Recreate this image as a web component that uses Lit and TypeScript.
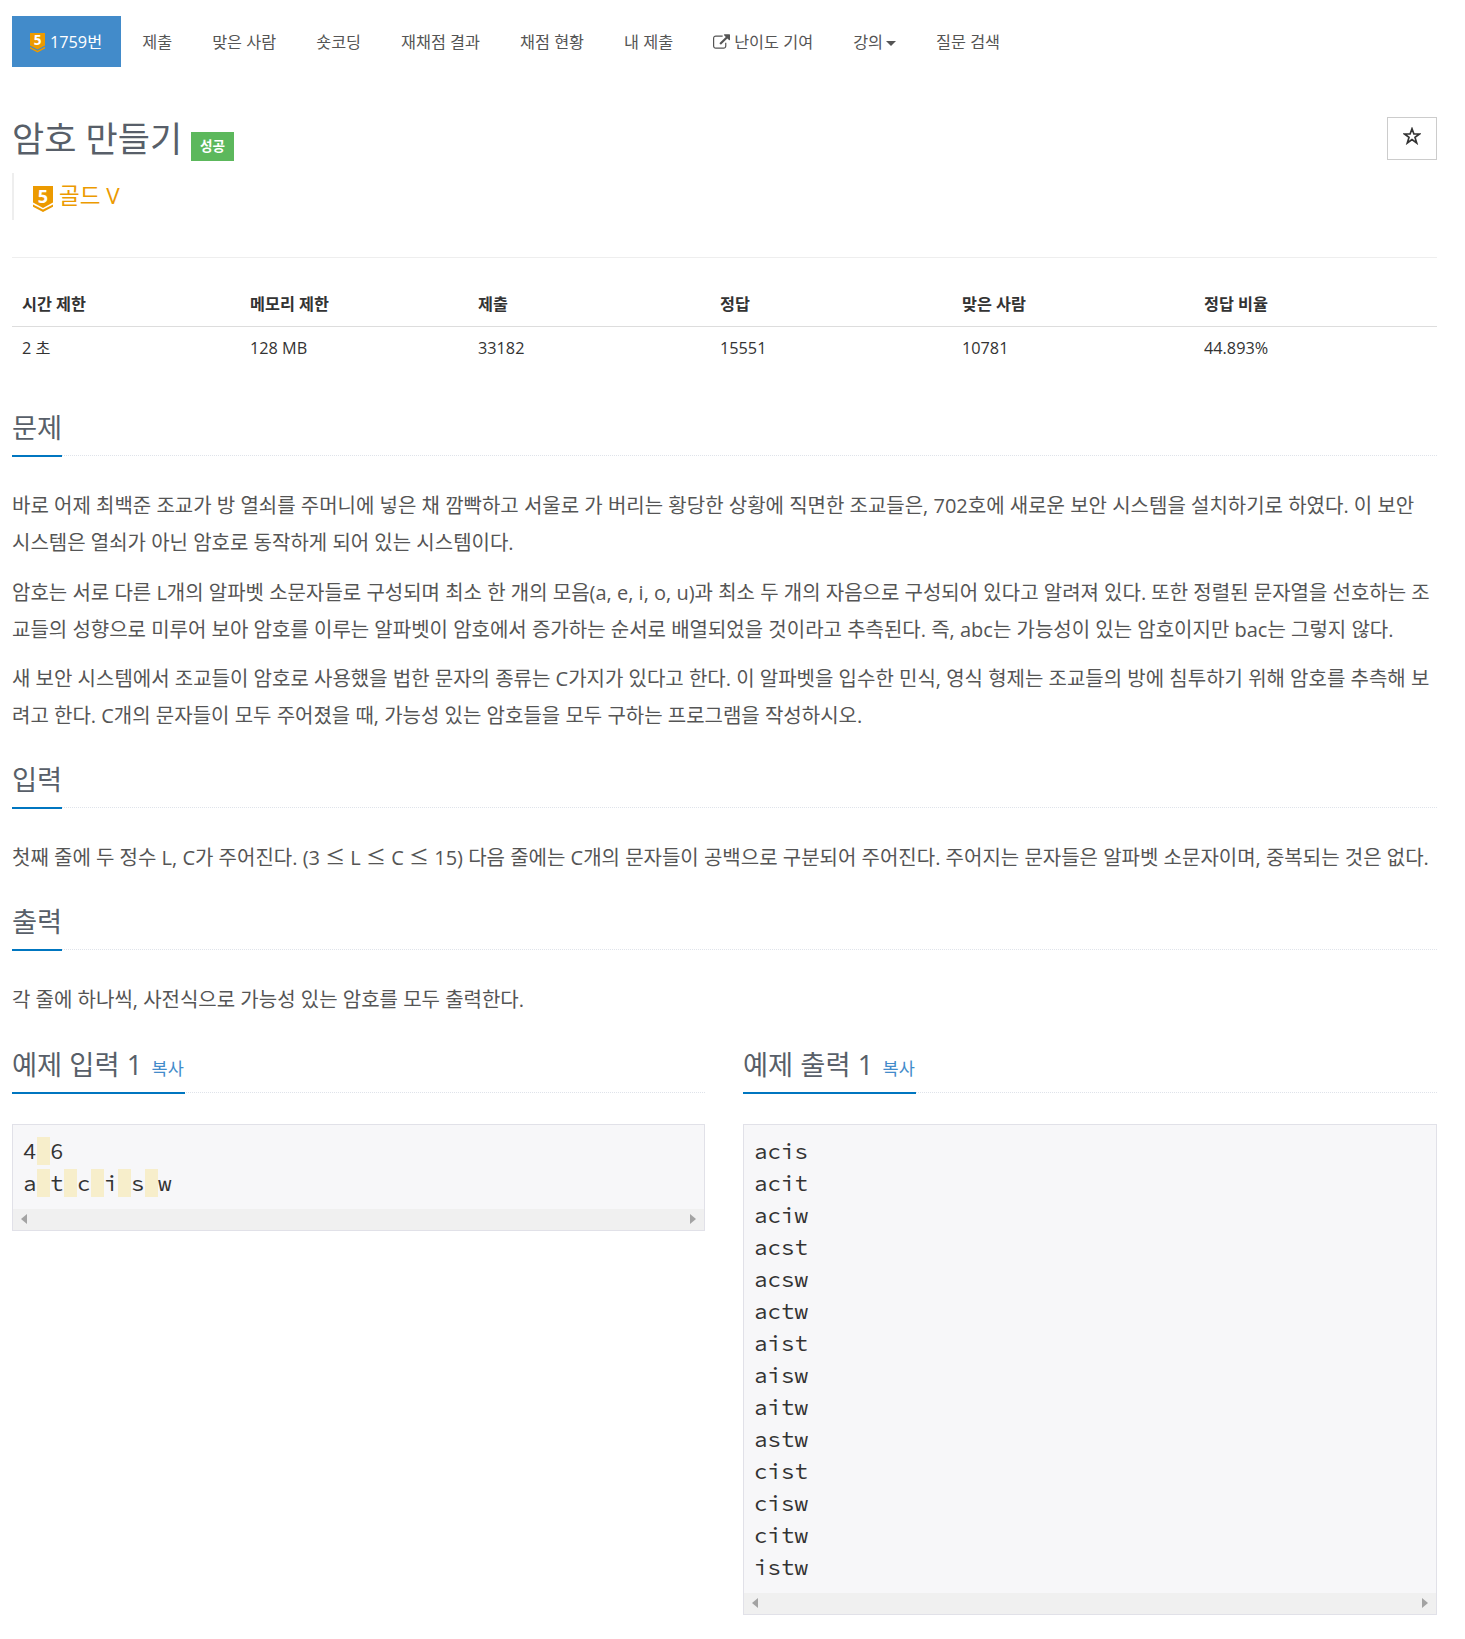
import { LitElement, html, css, svg } from "lit";
import { customElement, property } from "lit/decorators.js";

const NAV = ["제출", "맞은 사람", "숏코딩", "재채점 결과", "채점 현황", "내 제출"];
const STATS: [string, string][] = [
  ["시간 제한", "2 초"],
  ["메모리 제한", "128 MB"],
  ["제출", "33182"],
  ["정답", "15551"],
  ["맞은 사람", "10781"],
  ["정답 비율", "44.893%"],
];
const PROBLEM = [
  [
    "바로 어제 최백준 조교가 방 열쇠를 주머니에 넣은 채 깜빡하고 서울로 가 버리는 황당한 상황에 직면한 조교들은, 702호에 새로운 보안 시스템을 설치하기로 하였다. 이 보안",
    "시스템은 열쇠가 아닌 암호로 동작하게 되어 있는 시스템이다.",
  ],
  [
    "암호는 서로 다른 L개의 알파벳 소문자들로 구성되며 최소 한 개의 모음(a, e, i, o, u)과 최소 두 개의 자음으로 구성되어 있다고 알려져 있다. 또한 정렬된 문자열을 선호하는 조",
    "교들의 성향으로 미루어 보아 암호를 이루는 알파벳이 암호에서 증가하는 순서로 배열되었을 것이라고 추측된다. 즉, abc는 가능성이 있는 암호이지만 bac는 그렇지 않다.",
  ],
  [
    "새 보안 시스템에서 조교들이 암호로 사용했을 법한 문자의 종류는 C가지가 있다고 한다. 이 알파벳을 입수한 민식, 영식 형제는 조교들의 방에 침투하기 위해 암호를 추측해 보",
    "려고 한다. C개의 문자들이 모두 주어졌을 때, 가능성 있는 암호들을 모두 구하는 프로그램을 작성하시오.",
  ],
];
const INPUT = [["첫째 줄에 두 정수 L, C가 주어진다. (3 ≤ L ≤ C ≤ 15) 다음 줄에는 C개의 문자들이 공백으로 구분되어 주어진다. 주어지는 문자들은 알파벳 소문자이며, 중복되는 것은 없다."]];
const OUTPUT = [["각 줄에 하나씩, 사전식으로 가능성 있는 암호를 모두 출력한다."]];
const SAMPLE_IN = ["4 6", "a t c i s w"];
const SAMPLE_OUT = ["acis", "acit", "aciw", "acst", "acsw", "actw", "aist", "aisw", "aitw", "astw", "cist", "cisw", "citw", "istw"];

@customElement("tier-badge")
class TierBadge extends LitElement {
  static styles = css`
    :host { display: block; flex: none; }
    .badge { display: block; width: 100%; height: 100%; overflow: visible; }
    .num { font: 700 18px "Open Sans", sans-serif; }
  `;
  render() {
    return html`<svg class="badge" viewBox="0 0 20 26">
      ${svg`<path d="M0 0H20V16.6L10 22L0 16.6Z" fill="#ec9a00"/>
      <path d="M0 18.4L10 23.6L20 18.4V20.8L10 26L0 20.8Z" fill="#ec9a00"/>
      <text class="num" x="10" y="16.6" text-anchor="middle" fill="#fff">5</text>`}
    </svg>`;
  }
}

@customElement("section-title")
class SectionTitle extends LitElement {
  @property() label = "";
  @property({ type: Boolean }) copy = false;
  static styles = css`
    :host { display: flex; height: 51px; border-bottom: 1px dotted #dfe3ea; box-sizing: border-box; }
    .title {
      margin: 0; height: 52px; box-sizing: border-box; border-bottom: 2px solid #0076c0;
      font-size: 27.3px; line-height: 46px; font-weight: 400; color: #585f69; white-space: nowrap;
    }
    .copy { font-size: 17.5px; color: #428bca; margin: 0 0.9px 0 2.2px; }
  `;
  render() {
    return html`<h2 class="title">${this.label}${this.copy ? html` <span class="copy">복사</span>` : ""}</h2>`;
  }
}

@customElement("sample-box")
class SampleBox extends LitElement {
  @property({ attribute: false }) lines: string[] = [];
  @property({ type: Boolean }) marks = false;
  static styles = css`
    :host { display: block; border: 1px solid #e1e1e8; background: #f7f7f9; }
    .code {
      margin: 0; padding: 10px 10px; color: #333; font-size: 22.5px; line-height: 32px;
      font-family: "Source Code Pro", "Liberation Mono", monospace;
    }
    .line { display: flex; height: 32px; white-space: pre; }
    .space { width: 13.5px; height: 28px; margin-top: 2px; background: #f7eecb; }
    .bar { height: 21px; background: #f0f0f0; display: flex; justify-content: space-between; align-items: center; padding: 0 8px; }
    .arrow { display: block; width: 6px; height: 10px; }
  `;
  render() {
    return html`<div class="code">
        ${this.lines.map((l) => html`<div class="line">${this.marks
          ? [...l].map((c) => (c === " " ? html`<span class="space"></span>` : html`<span>${c}</span>`))
          : l}</div>`)}
      </div>
      <div class="bar">
        <svg class="arrow" viewBox="0 0 6 10"><path d="M6 0V10L0 5Z" fill="#a3a3a3"/></svg>
        <svg class="arrow" viewBox="0 0 6 10"><path d="M0 0V10L6 5Z" fill="#a3a3a3"/></svg>
      </div>`;
  }
}

@customElement("app-root")
class AppRoot extends LitElement {
  static styles = css`
    :host {
      display: block; box-sizing: border-box; min-height: 1639px; padding: 16px 28px 24px 12px; background: #fff;
      font-family: "Open Sans", "Noto Sans CJK KR", sans-serif; font-size: 16.25px; color: #333;
    }
    .nav { display: flex; height: 51px; gap: 2.5px; color: #555; line-height: 49px; white-space: nowrap; }
    .item { display: flex; align-items: center; padding: 2px 18.75px 0; }
    .active { background: #428bca; color: #fff; width: 109px; box-sizing: border-box; padding: 2px 0 0 18px; }
    .small { width: 15px; height: 19.5px; margin: 1px 5px 0 0; }
    .ext { width: 17px; height: 15px; margin: 0 4px 2px 0; }
    .caret { width: 0; height: 0; border: 5px solid transparent; border-top-color: #555; border-bottom: 0; margin: 1px 0 0 3px; }
    .head { display: flex; justify-content: space-between; align-items: flex-start; margin-top: 50px; height: 56px; }
    .name { display: flex; }
    .title { margin: 0; font-size: 35px; line-height: 43px; font-weight: 400; color: #585f69; white-space: nowrap; }
    .ok { margin: 15px 0 0 9px; width: 43px; height: 29px; line-height: 28px; text-align: center; background: #5cb85c; color: #fff; font-size: 13.6px; font-weight: 600; }
    .fav { box-sizing: border-box; width: 50px; height: 43px; border: 1px solid #ccc; display: flex; justify-content: center; padding-top: 9px; }
    .star { width: 18px; height: 18px; }
    .tier { display: flex; height: 47px; border-left: 2px solid #eee; padding-left: 19px; color: #ec9a00; font-size: 22.5px; line-height: 46px; }
    .big { width: 20px; height: 26px; margin: 13px 6px 0 0; }
    .rule { height: 1px; background: #eee; margin-top: 37px; }
    .stats { display: grid; grid-template-columns: 228px 228px 242px 242px 242px 1fr; margin-top: 25px; }
    .th { height: 43px; line-height: 43px; padding-left: 10px; font-weight: 700; border-bottom: 1px solid #ddd; }
    .td { height: 43px; line-height: 43px; padding-left: 10px; }
    .first { margin-top: 35px; }
    .text { padding-top: 31px; margin-bottom: 10.7px; font-size: 20px; line-height: 37px; color: #555; display: flow-root; }
    .para { margin: 0 0 12.5px; white-space: nowrap; }
    .le { font-family: "Noto Sans CJK KR", sans-serif; line-height: 1; }
    .samples { display: grid; grid-template-columns: 693px 694px; justify-content: space-between; align-items: start; }
    .box { margin-top: 31px; }
  `;
  private math(line: string) {
    return line.split("≤").map((part, i) => html`${i ? html`<span class="le">≤</span>` : ""}${part}`);
  }
  private text(paras: string[][]) {
    return html`<div class="text">${paras.map((p) => html`<p class="para">${p.map((l, i) => html`${i ? html`<br />` : ""}${this.math(l)}`)}</p>`)}</div>`;
  }
  render() {
    return html`
      <nav class="nav">
        <div class="item active"><tier-badge class="small"></tier-badge>1759번</div>
        ${NAV.map((n) => html`<div class="item">${n}</div>`)}
        <div class="item">
          <svg class="ext" viewBox="0 0 1792 1536"><path fill="#555" d="M1408 928v320q0 119-84.500 203.500t-203.500 84.500h-832q-119 0-203.500-84.500t-84.500-203.500v-832q0-119 84.500-203.500t203.500-84.500h704q14 0 23 9t9 23v64q0 14-9 23t-23 9h-704q-66 0-113 47t-47 113v832q0 66 47 113t113 47h832q66 0 113-47t47-113v-320q0-14 9-23t23-9h64q14 0 23 9t9 23zM1792 64v512q0 26-19 45t-45 19-45-19l-176-176-652 652q-10 10-23 10t-23-10l-114-114q-10-10-10-23t10-23l652-652-176-176q-19-19-19-45t19-45 45-19h512q26 0 45 19t19 45z"/></svg>난이도 기여
        </div>
        <div class="item">강의<span class="caret"></span></div>
        <div class="item">질문 검색</div>
      </nav>
      <header class="head">
        <div class="name"><h1 class="title">암호 만들기</h1><span class="ok">성공</span></div>
        <div class="fav"><svg class="star" viewBox="0 0 18 18"><path d="M9 1.800L10.900 7H16.500L12 10.400L13.700 16L9 12.600L4.300 16L6 10.400L1.500 7H7.100Z" fill="none" stroke="#333" stroke-width="1.700"/></svg></div>
      </header>
      <div class="tier"><tier-badge class="big"></tier-badge>골드 V</div>
      <div class="rule"></div>
      <div class="stats">
        ${STATS.map(([h]) => html`<div class="th">${h}</div>`)}
        ${STATS.map(([, v]) => html`<div class="td">${v}</div>`)}
      </div>
      <section-title class="first" label="문제"></section-title>
      ${this.text(PROBLEM)}
      <section-title label="입력"></section-title>
      ${this.text(INPUT)}
      <section-title label="출력"></section-title>
      ${this.text(OUTPUT)}
      <div class="samples">
        <div><section-title label="예제 입력 1" copy></section-title><sample-box class="box" marks .lines=${SAMPLE_IN}></sample-box></div>
        <div><section-title label="예제 출력 1" copy></section-title><sample-box class="box" .lines=${SAMPLE_OUT}></sample-box></div>
      </div>`;
  }
}
